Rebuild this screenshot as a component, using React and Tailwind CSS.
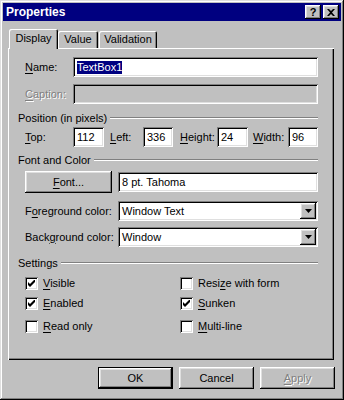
import React from 'react';

const raised = 'shadow-[inset_-1px_-1px_0_#000,inset_1px_1px_0_#fff,inset_-2px_-2px_0_#808080,inset_2px_2px_0_#dfdfdf]';
const sunken = 'shadow-[inset_1px_1px_0_#808080,inset_-1px_-1px_0_#fff,inset_2px_2px_0_#000,inset_-2px_-2px_0_#dfdfdf]';

const U = ({ children }) => <span className="underline underline-offset-[2px] decoration-1">{children}</span>;

const Heading = ({ children }) => (
  <div className="flex items-center h-[14px] pl-[10px] pr-[16px]">
    <span className="whitespace-nowrap">{children}</span>
    <div className="flex-1 ml-[3px] border-t border-[#808080] border-b border-b-white" />
  </div>
);

const Input = ({ className = '', children, disabled }) => (
  <div className={`h-[20px] flex items-center pl-[4px] ${disabled ? 'bg-[#c0c0c0]' : 'bg-white'} ${sunken} ${className}`}>
    {children}
  </div>
);

const Select = ({ value }) => (
  <div className={`flex-1 h-[20px] flex items-center pl-[4px] pr-[2px] bg-white ${sunken}`}>
    <span className="flex-1">{value}</span>
    <div className={`w-[16px] h-[16px] bg-[#c0c0c0] flex items-center justify-center ${raised}`}>
      <svg width="7" height="4" viewBox="0 0 7 4">
        <path d="M0 0h7L3.5 4z" fill="#000" />
      </svg>
    </div>
  </div>
);

const Check = ({ checked, label }) => (
  <div className="flex items-center h-[13px]">
    <div className={`w-[13px] h-[13px] bg-white flex items-center justify-center ${sunken}`}>
      {checked && (
        <svg width="7" height="7" viewBox="0 0 7 7">
          <path d="M0 2v3l2 2 5-5V-1L2 4z" fill="#000" />
        </svg>
      )}
    </div>
    <span className="ml-[5px]">{label}</span>
  </div>
);

const Btn = ({ children, isDefault, disabled }) => (
  <div className={`w-[75px] h-[22px] ${isDefault ? 'border border-black' : ''}`}>
    <div className={`w-full h-full flex items-center justify-center ${raised} ${disabled ? 'text-[#808080] [text-shadow:1px_1px_0_#fff]' : ''}`}>
      {children}
    </div>
  </div>
);

export default function App() {
  return (
    <div
      className="w-[344px] h-[400px] bg-[#c0c0c0] p-[3px] text-[11px] leading-[13px] text-black shadow-[inset_-1px_-1px_0_#000,inset_1px_1px_0_#dfdfdf,inset_-2px_-2px_0_#808080,inset_2px_2px_0_#fff]"
      style={{ fontFamily: '"Liberation Sans", Arial, sans-serif' }}
    >
      {/* Title bar */}
      <div className="h-[18px] bg-[#000080] flex items-center pl-[3px] pr-[2px]">
        <span className="flex-1 text-white font-bold text-[12px]">Properties</span>
        <div className={`w-[16px] h-[14px] bg-[#c0c0c0] flex items-center justify-center font-bold text-[11px] ${raised}`}>?</div>
        <div className={`ml-[2px] w-[16px] h-[14px] bg-[#c0c0c0] flex items-center justify-center ${raised}`}>
          <svg width="8" height="7" viewBox="0 0 8 7">
            <path d="M0 0h2l2 2 2-2h2L5 3.5 8 7H6L4 5 2 7H0l3-3.5z" fill="#000" />
          </svg>
        </div>
      </div>

      {/* Tabs */}
      <div className="mt-[8px] h-[20px] flex items-end pl-[6px] relative z-10">
        <div className="w-[49px] h-[20px] bg-[#c0c0c0] rounded-t-[2px] flex items-center justify-center pb-[2px] shadow-[inset_1px_1px_0_#fff,inset_-1px_0_0_#000,inset_-2px_0_0_#808080]">
          Display
        </div>
        <div className="w-[40px] h-[17px] mb-px rounded-t-[2px] flex items-center justify-center shadow-[inset_1px_1px_0_#fff,inset_-1px_0_0_#000,inset_-2px_0_0_#808080]">
          Value
        </div>
        <div className="ml-px w-[58px] h-[17px] mb-px rounded-t-[2px] flex items-center justify-center shadow-[inset_1px_1px_0_#fff,inset_-1px_0_0_#000,inset_-2px_0_0_#808080]">
          Validation
        </div>
      </div>

      {/* Tab panel */}
      <div className="-mt-px ml-[5px] w-[326px] h-[312px] pt-[9px] shadow-[inset_1px_1px_0_#fff,inset_-1px_-1px_0_#000,inset_-2px_-2px_0_#808080]">
        <div className="flex items-center pl-[17px] pr-[16px]">
          <span className="w-[48px]"><U>N</U>ame:</span>
          <Input className="flex-1">
            <span className="bg-[#000080] text-white">TextBox1</span>
          </Input>
        </div>
        <div className="mt-[7px] flex items-center pl-[17px] pr-[16px]">
          <span className="w-[48px] text-[#808080] [text-shadow:1px_1px_0_#fff]"><U>C</U>aption:</span>
          <Input className="flex-1" disabled />
        </div>

        <div className="mt-[7px]">
          <Heading>Position (in pixels)</Heading>
        </div>
        <div className="mt-[2px] flex items-center pl-[17px] pr-[16px]">
          <span className="w-[48px]"><U>T</U>op:</span>
          <Input className="w-[31px]">112</Input>
          <span className="ml-[6px] w-[33px]"><U>L</U>eft:</span>
          <Input className="w-[30px]">336</Input>
          <span className="ml-[7px] w-[37px]"><U>H</U>eight:</span>
          <Input className="w-[31px]">24</Input>
          <span className="ml-[5px] w-[35px]"><U>W</U>idth:</span>
          <Input className="flex-1">96</Input>
        </div>

        <div className="mt-[6px]">
          <Heading>Font and Color</Heading>
        </div>
        <div className="mt-[4px] flex items-center pl-[17px] pr-[16px]">
          <div className="w-[87px] h-[22px]">
            <div className={`w-full h-full flex items-center justify-center ${raised}`}>
              <span><U>F</U>ont...</span>
            </div>
          </div>
          <Input className="flex-1 ml-[6px]">8 pt. Tahoma</Input>
        </div>
        <div className="mt-[8px] flex items-center pl-[17px] pr-[16px]">
          <span className="w-[93px]">F<U>o</U>reground color:</span>
          <Select value="Window Text" />
        </div>
        <div className="mt-[6px] flex items-center pl-[17px] pr-[16px]">
          <span className="w-[93px]">Back<U>g</U>round color:</span>
          <Select value="Window" />
        </div>

        <div className="mt-[9px]">
          <Heading>Settings</Heading>
        </div>
        <div className="mt-[7px] pl-[17px] grid grid-cols-[155px_1fr] gap-y-[7px]">
          <Check checked label={<><U>V</U>isible</>} />
          <Check label={<>Resi<U>z</U>e with form</>} />
          <Check checked label={<><U>E</U>nabled</>} />
          <Check checked label={<><U>S</U>unken</>} />
          <div className="mt-[3px]"><Check label={<><U>R</U>ead only</>} /></div>
          <div className="mt-[3px]"><Check label={<><U>M</U>ulti-line</>} /></div>
        </div>
      </div>

      {/* Buttons */}
      <div className="mt-[7px] flex justify-end gap-[6px] pr-[6px]">
        <Btn isDefault>OK</Btn>
        <Btn>Cancel</Btn>
        <Btn disabled><U>A</U>pply</Btn>
      </div>
    </div>
  );
}
